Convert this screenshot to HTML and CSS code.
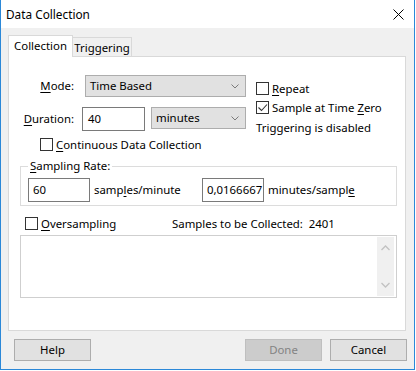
FILE: index.html
```html
<!DOCTYPE html>
<html lang="en">
<head>
  <meta charset="UTF-8">
  <title>Data Collection</title>
  <link rel="stylesheet" href="styles.css">
</head>
<body>
  <div class="window">
    <div class="titlebar">
      <span class="title">Data Collection</span>
      <svg class="close" width="11" height="11" viewBox="0 0 11 11">
        <path d="M0.5 0.5 L10.5 10.5 M10.5 0.5 L0.5 10.5" stroke="#000" stroke-width="1" fill="none"/>
      </svg>
    </div>

    <div class="client">
      <!-- Tabs -->
      <div class="tabs">
        <div class="tab active">Collection</div>
        <div class="tab">Triggering</div>
      </div>

      <div class="panel">
        <div class="top">
          <div class="form">
            <div class="row">
              <span class="lbl"><u>M</u>ode:</span>
              <div class="select mode">
                <span>Time Based</span>
                <svg width="8" height="5" viewBox="0 0 8 5"><path d="M0.5 0.5 L4 4 L7.5 0.5" stroke="#7a7a7a" fill="none"/></svg>
              </div>
            </div>
            <div class="row dur-row">
              <span class="lbl"><u>D</u>uration:</span>
              <div class="input dur">40</div>
              <div class="select unit">
                <span>minutes</span>
                <svg width="8" height="5" viewBox="0 0 8 5"><path d="M0.5 0.5 L4 4 L7.5 0.5" stroke="#7a7a7a" fill="none"/></svg>
              </div>
            </div>
            <div class="check cont">
              <span class="box"></span>
              <span><u>C</u>ontinuous Data Collection</span>
            </div>
          </div>

          <div class="side">
            <div class="check">
              <span class="box"></span>
              <span><u>R</u>epeat</span>
            </div>
            <div class="check">
              <span class="box">
                <svg width="11" height="11" viewBox="0 0 11 11"><path d="M1.5 5.5 L4.5 8.5 L10 2.5" stroke="#333" stroke-width="1.1" fill="none"/></svg>
              </span>
              <span>Sample at Time <u>Z</u>ero</span>
            </div>
            <div class="note">Triggering is disabled</div>
          </div>
        </div>

        <!-- Sampling Rate group -->
        <fieldset class="group">
          <legend><u>S</u>ampling Rate:</legend>
          <div class="rate">
            <div class="pair">
              <div class="input rate-in">60</div>
              <span>samp<u>l</u>es/minute</span>
            </div>
            <div class="pair">
              <div class="input rate-in">0,0166667</div>
              <span>minutes/sampl<u>e</u></span>
            </div>
          </div>
        </fieldset>

        <div class="over-row">
          <div class="check over">
            <span class="box"></span>
            <span><u>O</u>versampling</span>
          </div>
          <span class="count">Samples to be Collected:&nbsp; 2401</span>
        </div>

        <div class="memo">
          <div class="scrollbar">
            <svg width="9" height="6" viewBox="0 0 9 6"><path d="M0.5 5 L4.5 1 L8.5 5" stroke="#c2c2c2" stroke-width="1.3" fill="none"/></svg>
            <svg width="9" height="6" viewBox="0 0 9 6"><path d="M0.5 1 L4.5 5 L8.5 1" stroke="#c2c2c2" stroke-width="1.3" fill="none"/></svg>
          </div>
        </div>
      </div>

      <!-- Dialog buttons -->
      <div class="buttons">
        <div class="btn">Help</div>
        <div class="spacer"></div>
        <div class="btn disabled">Done</div>
        <div class="btn">Cancel</div>
      </div>
    </div>
  </div>
</body>
</html>
```

FILE: styles.css
```css
/* General Reset */
* {
  box-sizing: border-box;
}

body {
  margin: 0;
  background: #fff;
  font-family: "Noto Sans", "Open Sans", sans-serif;
  font-size: 11.4px;
  line-height: 16px;
  color: #000;
}

u {
  text-decoration-thickness: 1px;
  text-underline-offset: 2px;
}

/* Window frame */
.window {
  width: 415px;
  height: 370px;
  border: 1px solid #2b88d8;
  border-top: none;
  background: #f0f0f0;
  display: flex;
  flex-direction: column;
}

.titlebar {
  height: 28px;
  background: #fff;
  display: flex;
  align-items: center;
  justify-content: space-between;
  padding: 0 10px 0 5px;
}

.title {
  font-size: 11.8px;
}

.close {
  margin-top: 1px;
}

.client {
  flex: 1;
  padding: 7px 8px 0 7px;
}

/* Tabs */
.tabs {
  display: flex;
  align-items: flex-end;
  height: 21px;
}

.tab {
  height: 19px;
  width: 59px;
  border: 1px solid #d9d9d9;
  border-left: none;
  border-bottom: none;
  text-align: center;
  line-height: 19px;
  background: #f0f0f0;
}

.tab.active {
  position: relative;
  z-index: 1;
  height: 22px;
  width: 65px;
  margin-bottom: -1px;
  border-left: 1px solid #d9d9d9;
  background: #fff;
  line-height: 20px;
}

/* Tab page */
.panel {
  height: 275px;
  background: #fff;
  border: 1px solid #d9d9d9;
  padding-top: 18px;
}

.top {
  display: flex;
}

.form {
  width: 238px;
}

.row {
  display: flex;
  align-items: center;
}

.dur-row {
  margin-top: 10px;
  align-items: flex-start;
}

.lbl {
  width: 65px;
  text-align: right;
  line-height: 22px;
}

.dur-row .lbl {
  line-height: 24px;
}

.select {
  height: 22px;
  background: #e1e1e1;
  border: 1px solid #adadad;
  display: flex;
  align-items: center;
  justify-content: space-between;
  padding: 0 6px 0 4px;
}

.select.mode {
  width: 161px;
  margin-left: 11px;
}

.select.unit {
  width: 95px;
  margin-left: 6px;
}

.input {
  height: 24px;
  background: #fff;
  border: 1px solid #7a7a7a;
  line-height: 22px;
  padding-left: 5px;
  white-space: nowrap;
}

.input.dur {
  width: 63px;
  margin-left: 8px;
}

/* Checkboxes */
.check {
  display: flex;
  align-items: center;
  height: 13px;
  gap: 3px;
  white-space: nowrap;
}

.box {
  width: 13px;
  height: 13px;
  flex: none;
  border: 1px solid #333;
  background: #fff;
}

.box svg {
  display: block;
}

.check.cont {
  margin-top: 7px;
  padding-left: 31px;
}

.side {
  margin-left: 9px;
  padding-top: 7px;
}

.side .check + .check {
  margin-top: 6px;
}

.note {
  margin-top: 6px;
}

/* Sampling Rate group */
.group {
  margin: 7px 0 0 11px;
  width: 377px;
  border: 1px solid #dcdcdc;
  padding: 4px 7px 3px 7px;
}

.group legend {
  padding: 0 2px;
  line-height: 16px;
}

.rate {
  display: flex;
}

.pair {
  width: 174px;
  display: flex;
  align-items: center;
  gap: 4px;
  white-space: nowrap;
}

.input.rate-in {
  width: 62px;
  flex: none;
  padding-left: 4px;
}

/* Oversampling */
.over-row {
  display: flex;
  align-items: center;
  margin-top: 11px;
  padding-left: 16px;
  height: 13px;
}

.check.over {
  width: 147px;
}

.memo {
  margin: 5px 0 0 11px;
  width: 377px;
  height: 63px;
  border: 1px solid #cfcfcf;
  padding: 1px 2px 1px 1px;
  display: flex;
  justify-content: flex-end;
}

.scrollbar {
  width: 17px;
  background: #f0f0f0;
  display: flex;
  flex-direction: column;
  justify-content: space-between;
  align-items: center;
  padding: 8px 0 8px;
}

.scrollbar svg {
  display: block;
}

/* Buttons */
.buttons {
  display: flex;
  gap: 8px;
  margin: 8px -1px 0 6px;
}

.spacer {
  flex: 1;
}

.btn {
  width: 77px;
  height: 22px;
  background: #e1e1e1;
  border: 1px solid #adadad;
  text-align: center;
  line-height: 20px;
}

.btn.disabled {
  background: #cccccc;
  border-color: #bfbfbf;
  color: #838383;
}
```
